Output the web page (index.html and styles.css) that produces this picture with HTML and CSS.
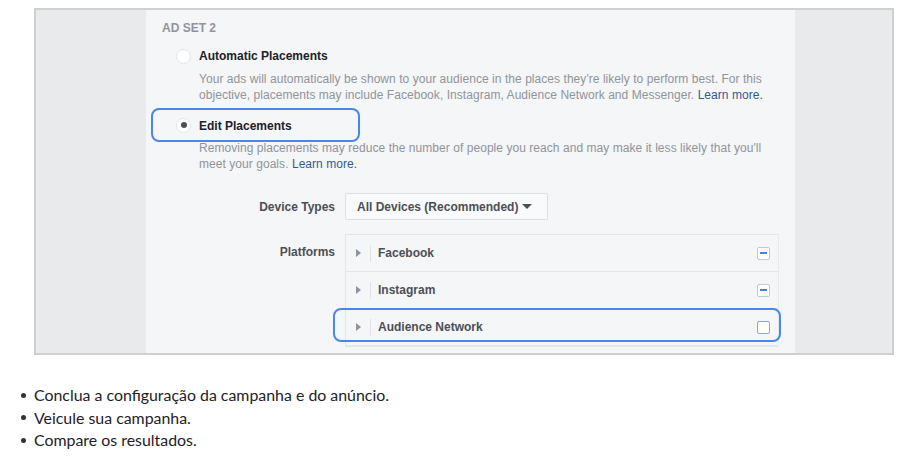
FILE: index.html
```html
<!DOCTYPE html>
<html>
<head>
<meta charset="utf-8">
<link rel="stylesheet" href="styles.css">
</head>
<body>
<div class="frame">
  <div class="side"></div>
  <div class="panel">
    <div class="title">AD SET 2</div>
    <div class="option">
      <span class="radio"></span>
      <span class="opt-label">Automatic Placements</span>
    </div>
    <p class="desc">Your ads will automatically be shown to your audience in the places they're likely to perform best. For this objective, placements may include Facebook, Instagram, Audience Network and Messenger. <a class="link">Learn more.</a></p>
    <div class="option selected">
      <span class="radio checked"></span>
      <span class="opt-label">Edit Placements</span>
    </div>
    <p class="desc desc2">Removing placements may reduce the number of people you reach and may make it less likely that you'll meet your goals. <a class="link">Learn more.</a></p>
    <div class="field device">
      <div class="field-label">Device Types</div>
      <div class="dropdown">
        <span>All Devices (Recommended)</span>
        <span class="caret"></span>
      </div>
    </div>
    <div class="field">
      <div class="field-label plat">Platforms</div>
      <div class="plist">
        <div class="prow">
          <span class="tri"></span><span class="sep"></span>
          <span class="pname">Facebook</span>
          <span class="check minus"></span>
        </div>
        <div class="prow">
          <span class="tri"></span><span class="sep"></span>
          <span class="pname">Instagram</span>
          <span class="check minus"></span>
        </div>
        <div class="prow hl">
          <span class="tri"></span><span class="sep"></span>
          <span class="pname">Audience Network</span>
          <span class="check empty"></span>
          <span class="hl-box"></span>
        </div>
      </div>
    </div>
  </div>
  <div class="side right"></div>
</div>
<ul class="steps">
  <li>Conclua a configuração da campanha e do anúncio.</li>
  <li>Veicule sua campanha.</li>
  <li>Compare os resultados.</li>
</ul>
</body>
</html>
```
FILE: styles.css
```css
* { box-sizing: border-box; }
body {
  margin: 0;
  background: #fff;
  font-family: "Liberation Sans", Arial, sans-serif;
}
.frame {
  margin: 8px 0 0 34px;
  width: 860px;
  height: 347px;
  border: 2px solid #cfd0d1;
  display: flex;
  overflow: hidden;
}
.side {
  width: 110px;
  background: #e9eaeb;
  flex: none;
}
.side.right { width: 97px; }
.panel {
  width: 649px;
  flex: none;
  background: #f5f6f7;
  padding: 10px 0 0 16px;
  font-size: 12px;
  line-height: 16px;
}
.title {
  font-weight: bold;
  color: #90949c;
}
.option {
  display: flex;
  align-items: center;
  height: 20px;
  margin-top: 10px;
  padding-left: 14px;
}
.radio {
  width: 15px;
  height: 15px;
  border-radius: 50%;
  background: #fff;
  border: 1px solid #e4e5e8;
  margin-right: 8px;
  display: flex;
  align-items: center;
  justify-content: center;
  flex: none;
}
.radio.checked::after {
  content: "";
  width: 6px;
  height: 6px;
  border-radius: 50%;
  background: #4b4f56;
}
.opt-label {
  font-weight: bold;
  color: #1d2129;
}
.desc {
  margin: 5px 0 0 37px;
  color: #90949c;
  width: 580px;
  letter-spacing: 0.05px;
}
.link { color: #365899; }
.option.selected {
  margin: 5px 0 0 -11px;
  width: 209px;
  height: 34px;
  border: 2px solid #4a86f0;
  border-radius: 8px;
  padding-left: 23px;
}
.option.selected .opt-label { padding-top: 2px; }
.desc2 { margin-top: -2px; }
.field {
  display: flex;
  align-items: flex-start;
  margin-top: 14px;
}
.field.device {
  margin-top: 21px;
  align-items: center;
}
.field-label {
  width: 173px;
  margin-right: 10px;
  text-align: right;
  font-weight: bold;
  color: #4b4f56;
}
.field-label.plat { padding-top: 10px; }
.dropdown {
  width: 203px;
  height: 27px;
  background: #f9fafb;
  border: 1px solid #dddfe2;
  border-radius: 2px;
  display: flex;
  align-items: center;
  justify-content: space-between;
  padding: 0 15px 0 11px;
  font-weight: bold;
  color: #4b4f56;
}
.caret {
  width: 0;
  height: 0;
  border-left: 5px solid transparent;
  border-right: 5px solid transparent;
  border-top: 5px solid #4b4f56;
}
.plist {
  width: 434px;
  border: 1px solid #e5e6e9;
  border-right-color: #e9eaed;
}
.prow {
  position: relative;
  height: 37px;
  display: flex;
  align-items: center;
  border-bottom: 1px solid #e5e6e9;
  padding-left: 10px;
}
.tri {
  width: 0;
  height: 0;
  border-top: 4px solid transparent;
  border-bottom: 4px solid transparent;
  border-left: 5px solid #8d949e;
  margin-right: 9px;
}
.sep {
  width: 1px;
  height: 17px;
  background: #e1e2e5;
  margin-right: 7px;
}
.pname {
  flex: 1;
  font-weight: bold;
  color: #4b4f56;
}
.check {
  width: 13px;
  height: 13px;
  background: #fff;
  border: 1px solid #c4c8ce;
  border-radius: 2px;
  margin-right: 8px;
  display: flex;
  align-items: center;
  justify-content: center;
}
.check.minus::after {
  content: "";
  width: 7px;
  height: 2px;
  background: #4a7ef0;
}
.check.empty { border-color: #8fa8dc; }
.hl-box {
  position: absolute;
  left: -13px;
  right: -3px;
  top: -1px;
  height: 34px;
  border: 2px solid #4a86f0;
  border-radius: 8px;
}
.steps {
  list-style: none;
  margin: 29px 0 0 0;
  padding: 0 0 0 21px;
  font-family: Lato, "Open Sans", sans-serif;
  font-size: 15.9px;
  line-height: 22.5px;
  color: #1d2129;
}
.steps li {
  display: flex;
  align-items: center;
}
.steps li::before {
  content: "";
  width: 5px;
  height: 5px;
  border-radius: 50%;
  background: #333;
  margin-right: 8px;
  flex: none;
}
```
